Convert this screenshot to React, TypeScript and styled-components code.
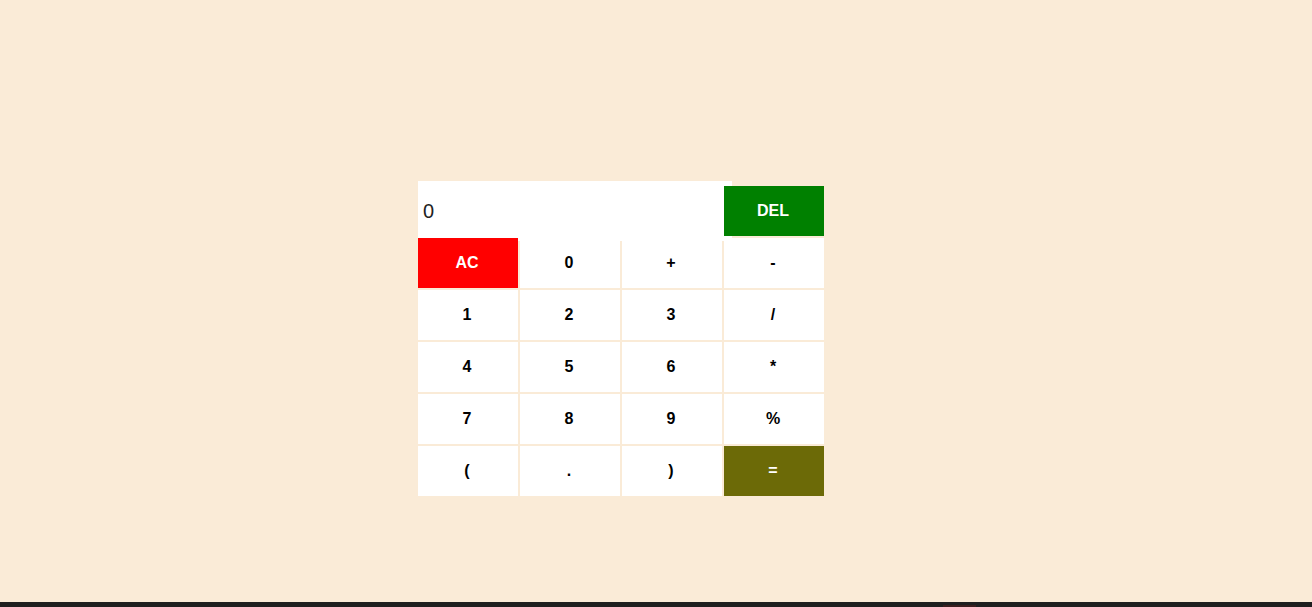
import React, { useState } from "react";
import styled, { createGlobalStyle } from "styled-components";

const Global = createGlobalStyle`
  html, body { margin: 0; padding: 0; height: 100%; }
  body { background: #faebd7; font-family: "Liberation Sans", Arial, sans-serif; }
  #root { min-height: 100vh; display: flex; flex-direction: column; }
`;

const Page = styled.main`
  flex: 1;
  display: flex;
  align-items: flex-start;
  padding: 186px 0 0 418px;
`;

const Pad = styled.div`
  display: grid;
  grid-template-columns: repeat(4, 100px);
  grid-auto-rows: 50px;
  gap: 2px;
`;

const Display = styled.input`
  grid-column: span 3;
  align-self: center;
  width: calc(100% + 10px);
  height: 60px;
  margin: -5px 0;
  box-sizing: border-box;
  border: none;
  outline: none;
  padding: 0 0 0 5px;
  background: #fff;
  color: #222;
  font-family: "Liberation Sans", Arial, sans-serif;
  font-size: 20px;
`;

type Tone = "plain" | "red" | "green" | "olive";
const bg: Record<Tone, string> = {
  plain: "#ffffff",
  red: "#ff0000",
  green: "#008000",
  olive: "#6c6a07",
};

const Key = styled.button<{ $tone: Tone }>`
  border: none;
  margin: 0;
  padding: 0 2px 0 0;
  background: ${(p) => bg[p.$tone]};
  color: ${(p) => (p.$tone === "plain" ? "#000" : "#fff")};
  font-family: "Liberation Sans", Arial, sans-serif;
  font-weight: bold;
  font-size: 16px;
  cursor: pointer;
`;

const Bar = styled.footer`
  height: 5px;
  background: #1f1f1f;
  display: flex;
  align-items: flex-end;
  padding-left: 943px;
`;

const BarMark = styled.span`
  width: 33px;
  height: 2px;
  background: #3a1e1e;
`;

const rows: [string, Tone][] = [
  ["AC", "red"], ["0", "plain"], ["+", "plain"], ["-", "plain"],
  ["1", "plain"], ["2", "plain"], ["3", "plain"], ["/", "plain"],
  ["4", "plain"], ["5", "plain"], ["6", "plain"], ["*", "plain"],
  ["7", "plain"], ["8", "plain"], ["9", "plain"], ["%", "plain"],
  ["(", "plain"], [".", "plain"], [")", "plain"], ["=", "olive"],
];

export default function App() {
  const [value, setValue] = useState("0");
  return (
    <>
      <Global />
      <Page>
        <Pad>
          <Display value={value} onChange={(e) => setValue(e.target.value)} />
          <Key $tone="green">DEL</Key>
          {rows.map(([label, tone]) => (
            <Key key={label} $tone={tone}>{label}</Key>
          ))}
        </Pad>
      </Page>
      <Bar>
        <BarMark />
      </Bar>
    </>
  );
}
